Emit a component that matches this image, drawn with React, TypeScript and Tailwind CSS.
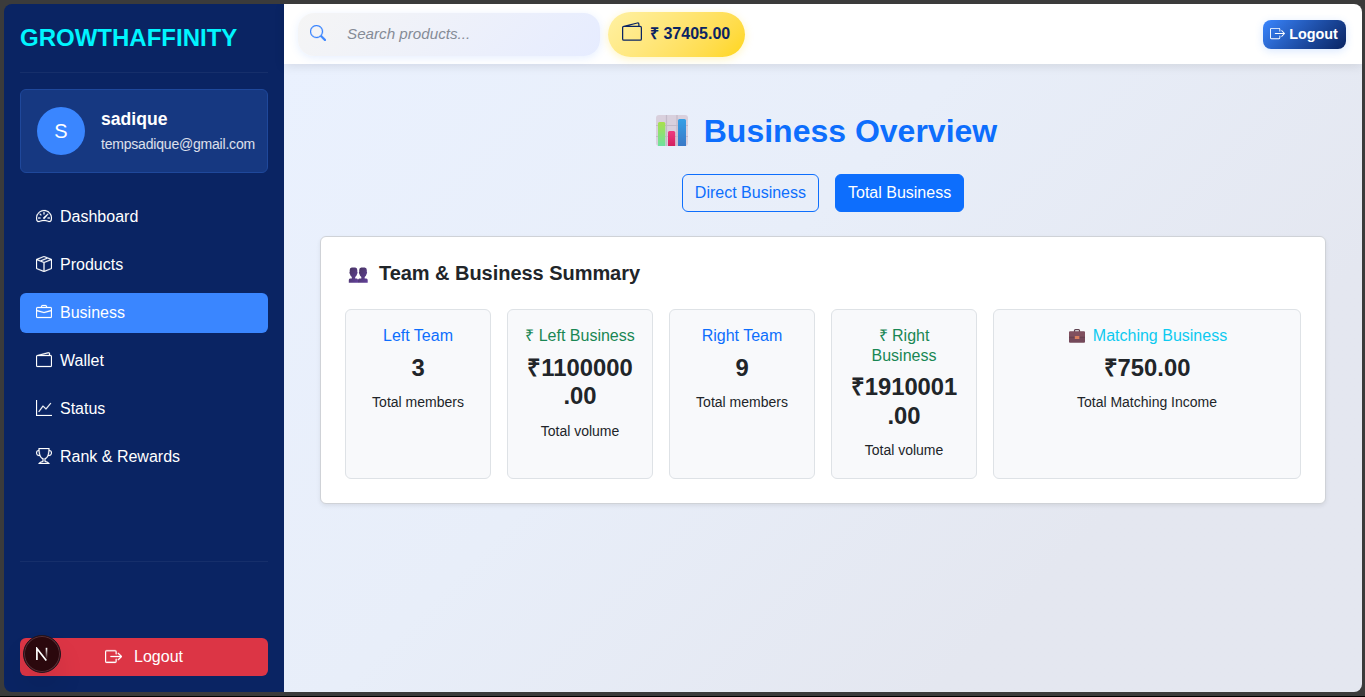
import React from "react";
import {
  BsBoxArrowRight,
  BsBoxSeam,
  BsBriefcase,
  BsGraphUp,
  BsSearch,
  BsSpeedometer2,
  BsTrophy,
  BsWallet2,
} from "react-icons/bs";

const navItems = [
  { label: "Dashboard", icon: BsSpeedometer2 },
  { label: "Products", icon: BsBoxSeam },
  { label: "Business", icon: BsBriefcase, active: true },
  { label: "Wallet", icon: BsWallet2 },
  { label: "Status", icon: BsGraphUp },
  { label: "Rank & Rewards", icon: BsTrophy },
];

function ChartEmoji() {
  return (
    <svg width="32" height="32" viewBox="0 0 32 32" aria-hidden="true">
      <defs>
        <linearGradient id="barGreen" x1="0" y1="0" x2="0" y2="1">
          <stop offset="0" stopColor="#a9e04c" />
          <stop offset="1" stopColor="#6fe0a0" />
        </linearGradient>
        <linearGradient id="barPink" x1="0" y1="0" x2="0" y2="1">
          <stop offset="0" stopColor="#ee3a80" />
          <stop offset="1" stopColor="#d3205f" />
        </linearGradient>
        <linearGradient id="barBlue" x1="0" y1="0" x2="0" y2="1">
          <stop offset="0" stopColor="#35a0e6" />
          <stop offset="1" stopColor="#3a78c6" />
        </linearGradient>
      </defs>
      <rect width="32" height="31" rx="3" fill="#d9d0dd" />
      <path d="M10.5 0v31M21 0v31M0 10.5h32M0 21.5h32" stroke="#c3bac9" strokeWidth="1.2" />
      <path d="M2 8.500Q2 7 3.500 7h4.300Q9.300 7 9.300 8.500V31H2z" fill="url(#barGreen)" />
      <path d="M12 17.500Q12 16 13.500 16h4.200Q19.200 16 19.200 17.500V31H12z" fill="url(#barPink)" />
      <path d="M22 5.500Q22 4 23.500 4h5Q30 4 30 5.500V31h-8z" fill="url(#barBlue)" />
    </svg>
  );
}

function PeopleEmoji() {
  return (
    <svg width="20" height="16" viewBox="0 0 20 16" aria-hidden="true">
      <defs>
        <linearGradient id="people" x1="0" y1="0" x2="1" y2="1">
          <stop offset="0" stopColor="#46345f" />
          <stop offset="1" stopColor="#62409a" />
        </linearGradient>
      </defs>
      <g fill="url(#people)">
        <path d="M3.800.5h3.400Q9.300.8 9.300 3v1.800q.8 1-.2 2.200-.4 2-1.900 3v1.400h1.600q1.200.3 1.200 1.600v2.700H.8V13q0-1.300 1.200-1.600h1.800V10q-1.500-1-1.900-3-1-1.200-.2-2.200V3Q1.700.8 3.800.5z" />
        <path d="M13.300.5h3.400q2.100.3 2.100 2.500v1.800q.8 1-.2 2.200-.4 2-1.900 3v1.400h1.600q1.400.3 1.400 1.600v2.700H10V13q0-1.300 1.400-1.600h1.900V10q-1.500-1-1.900-3-1-1.200-.2-2.200V3q0-2.200 2.100-2.500z" />
      </g>
    </svg>
  );
}

function BriefcaseEmoji() {
  return (
    <svg width="16" height="14" viewBox="0 0 16 14" aria-hidden="true">
      <path d="M5.500 3V1.600Q5.500.6 6.500.6h3q1 0 1 1V3" fill="none" stroke="#5d4350" strokeWidth="1.2" />
      <rect y="2.400" width="16" height="11.400" rx="1" fill="#74495a" />
      <path d="M0 3.400q0-1 1-1h14q1 0 1 1V8H0z" fill="#80505f" />
      <path d="M0 8.200h16" stroke="#603c4b" strokeWidth=".7" />
      <rect x="5.800" y="7" width="4.600" height="3" rx=".5" fill="#d87e5e" />
    </svg>
  );
}

function NextBadge() {
  return (
    <div className="absolute -top-[3px] left-[3px] flex size-[38px] items-center justify-center rounded-full border border-[#24141c] bg-[#2b080d] shadow-[inset_0_0_0_1px_#593037,0_16px_32px_-8px_rgba(0,0,0,0.24)]">
      <svg width="14" height="14" viewBox="0 0 14 14" fill="none" aria-hidden="true">
        <defs>
          <linearGradient id="nextStem" x1="0" y1="0" x2="0" y2="1">
            <stop offset="0" stopColor="#fff" />
            <stop offset="1" stopColor="#fff" stopOpacity="0" />
          </linearGradient>
        </defs>
        <path d="M1.900 13V1.500L11.300 13.500" stroke="#fff" strokeWidth="1.700" />
        <rect x="10.700" y=".8" width="1.600" height="11.500" fill="url(#nextStem)" />
      </svg>
    </div>
  );
}

function Sidebar() {
  return (
    <aside className="flex w-[280px] shrink-0 flex-col bg-[#0a2463] px-4 pb-4 text-white">
      <div className="flex h-[69px] items-center border-b border-white/5 text-2xl font-bold text-[#00f5ff]">
        GROWTHAFFINITY
      </div>
      <div className="mt-4 flex h-[84px] items-center gap-4 rounded-md border border-[#1f489b] bg-[#163881] pl-4">
        <div className="flex size-12 shrink-0 items-center justify-center rounded-full bg-[#3a86ff] text-xl">
          S
        </div>
        <div>
          <div className="text-[17.6px] leading-[26px] font-bold">sadique</div>
          <div className="text-[14px] leading-6 tracking-[-0.2px] text-white/85">
            tempsadique@gmail.com
          </div>
        </div>
      </div>
      <nav className="mt-6 flex flex-col gap-2">
        {navItems.map(({ label, icon: Icon, active }) => (
          <a
            key={label}
            className={
              active
                ? "flex h-10 items-center gap-2 rounded-md bg-[#3a86ff] px-4"
                : "flex h-10 items-center gap-2 rounded-md px-4"
            }
          >
            <Icon size={16} strokeWidth={0.25} className="-mt-0.5" />
            <span>{label}</span>
          </a>
        ))}
      </nav>
      <div className="relative mt-auto border-t border-white/5 pt-[76px]">
        <div className="relative">
          <button className="flex h-[38px] w-full items-center justify-center gap-3 rounded-md bg-[#dc3545]">
            <BsBoxArrowRight size={17} strokeWidth={0.25} className="-mt-0.5" />
            Logout
          </button>
          <NextBadge />
        </div>
      </div>
    </aside>
  );
}

function Header() {
  return (
    <header className="z-10 flex h-[60px] shrink-0 items-center bg-white pr-4 pl-3.5 shadow-[0_2px_10px_rgba(0,0,0,0.1)]">
      <div className="flex h-[43px] w-[302px] items-center rounded-2xl bg-linear-135 from-[#f5f5f5] to-[#e6ecff] pl-3 shadow-[0_2px_8px_rgba(58,134,255,0.13)]">
        <BsSearch size={16} strokeWidth={0.3} className="-mt-0.5 text-[#3a86ff]" />
        <span className="ml-[21px] text-[15.2px] text-[#858b96] italic">Search products...</span>
      </div>
      <div className="ml-2 flex h-[45px] w-[137px] items-center gap-2 rounded-full bg-linear-135 from-[#fff1a3] to-[#ffd60a] pb-px pl-[14px] font-bold text-[#0a2463] shadow-[0_2px_8px_rgba(255,214,10,0.25)]">
        <BsWallet2 size={20} className="-mt-[3px]" />
        <span className="whitespace-nowrap">₹ 37405.00</span>
      </div>
      <button className="ml-auto flex h-[29px] w-[83px] items-center justify-center gap-1 rounded-lg bg-linear-135 from-[#3a86ff] to-[#0a2463] pr-px text-[14.4px] font-bold text-white shadow-[0_2px_8px_rgba(58,134,255,0.2)]">
        <BsBoxArrowRight size={15} className="-mt-0.5" />
        <span className="pt-px">Logout</span>
      </button>
    </header>
  );
}

type StatProps = {
  title: React.ReactNode;
  color: string;
  value: React.ReactNode;
  note: string;
  span?: string;
};

function Stat({ title, color, value, note, span = "col-span-2" }: StatProps) {
  return (
    <div className={`${span} rounded-md border border-[#dee2e6] bg-[#f8f9fb] p-4 text-center`}>
      <h6 className={`mb-2 leading-[19.5px] ${color}`}>{title}</h6>
      <div className="mb-2 text-[23.8px] leading-[28.6px] font-bold">{value}</div>
      <div className="text-sm leading-6">{note}</div>
    </div>
  );
}

export default function App() {
  return (
    <div className="h-[697px] w-[1365px] border-b border-black bg-[#3b3b3b] pt-1 pr-[3px] pb-1 pl-1 font-['Liberation_Sans',Arial,sans-serif] text-base text-[#212529]">
      <div className="flex h-[688px] overflow-hidden rounded-lg">
        <Sidebar />
        <div className="flex min-w-0 flex-1 flex-col">
          <Header />
          <main className="flex-1 bg-linear-135 from-[#eaf1fe] via-[#e8eef9] via-40% to-[#e4e7f0] to-75% px-9">
            <h1 className="mt-[47px] flex h-[39px] items-center justify-center gap-4 pl-[7px] text-[32px] leading-[38px] font-bold text-[#0d6efd]">
              <ChartEmoji />
              Business Overview
            </h1>
            <div className="mt-6 flex justify-center gap-4">
              <button className="h-[38px] rounded-md border border-[#0d6efd] px-3 text-[#0d6efd]">
                Direct Business
              </button>
              <button className="h-[38px] rounded-md border border-[#0d6efd] bg-[#0d6efd] px-3 text-white">
                Total Business
              </button>
            </div>
            <section className="mt-6 h-[268px] rounded-md border border-[#cfd2d7] bg-white p-6 shadow-[0_2px_4px_rgba(0,0,0,0.075)]">
              <h5 className="mb-6 flex h-6 items-center gap-[11px] pl-[3px] text-xl leading-6 font-bold">
                <span className="pt-1">
                  <PeopleEmoji />
                </span>
                <span className="tracking-[-0.04px]">Team &amp; Business Summary</span>
              </h5>
              <div className="grid h-[170px] grid-cols-12 gap-4">
                <Stat title="Left Team" color="text-[#0d6efd]" value="3" note="Total members" />
                <Stat
                  title="₹ Left Business"
                  color="text-[#198754]"
                  value={<>₹1100000<br />.00</>}
                  note="Total volume"
                />
                <Stat title="Right Team" color="text-[#0d6efd]" value="9" note="Total members" />
                <Stat
                  title={<>₹ Right<br />Business</>}
                  color="text-[#198754]"
                  value={<>₹1910001<br />.00</>}
                  note="Total volume"
                />
                <Stat
                  title={
                    <span className="flex items-center justify-center gap-2 pl-0.5">
                      <BriefcaseEmoji />
                      Matching Business
                    </span>
                  }
                  color="text-[#0dcaf0]"
                  value="₹750.00"
                  note="Total Matching Income"
                  span="col-span-4"
                />
              </div>
            </section>
          </main>
        </div>
      </div>
    </div>
  );
}
